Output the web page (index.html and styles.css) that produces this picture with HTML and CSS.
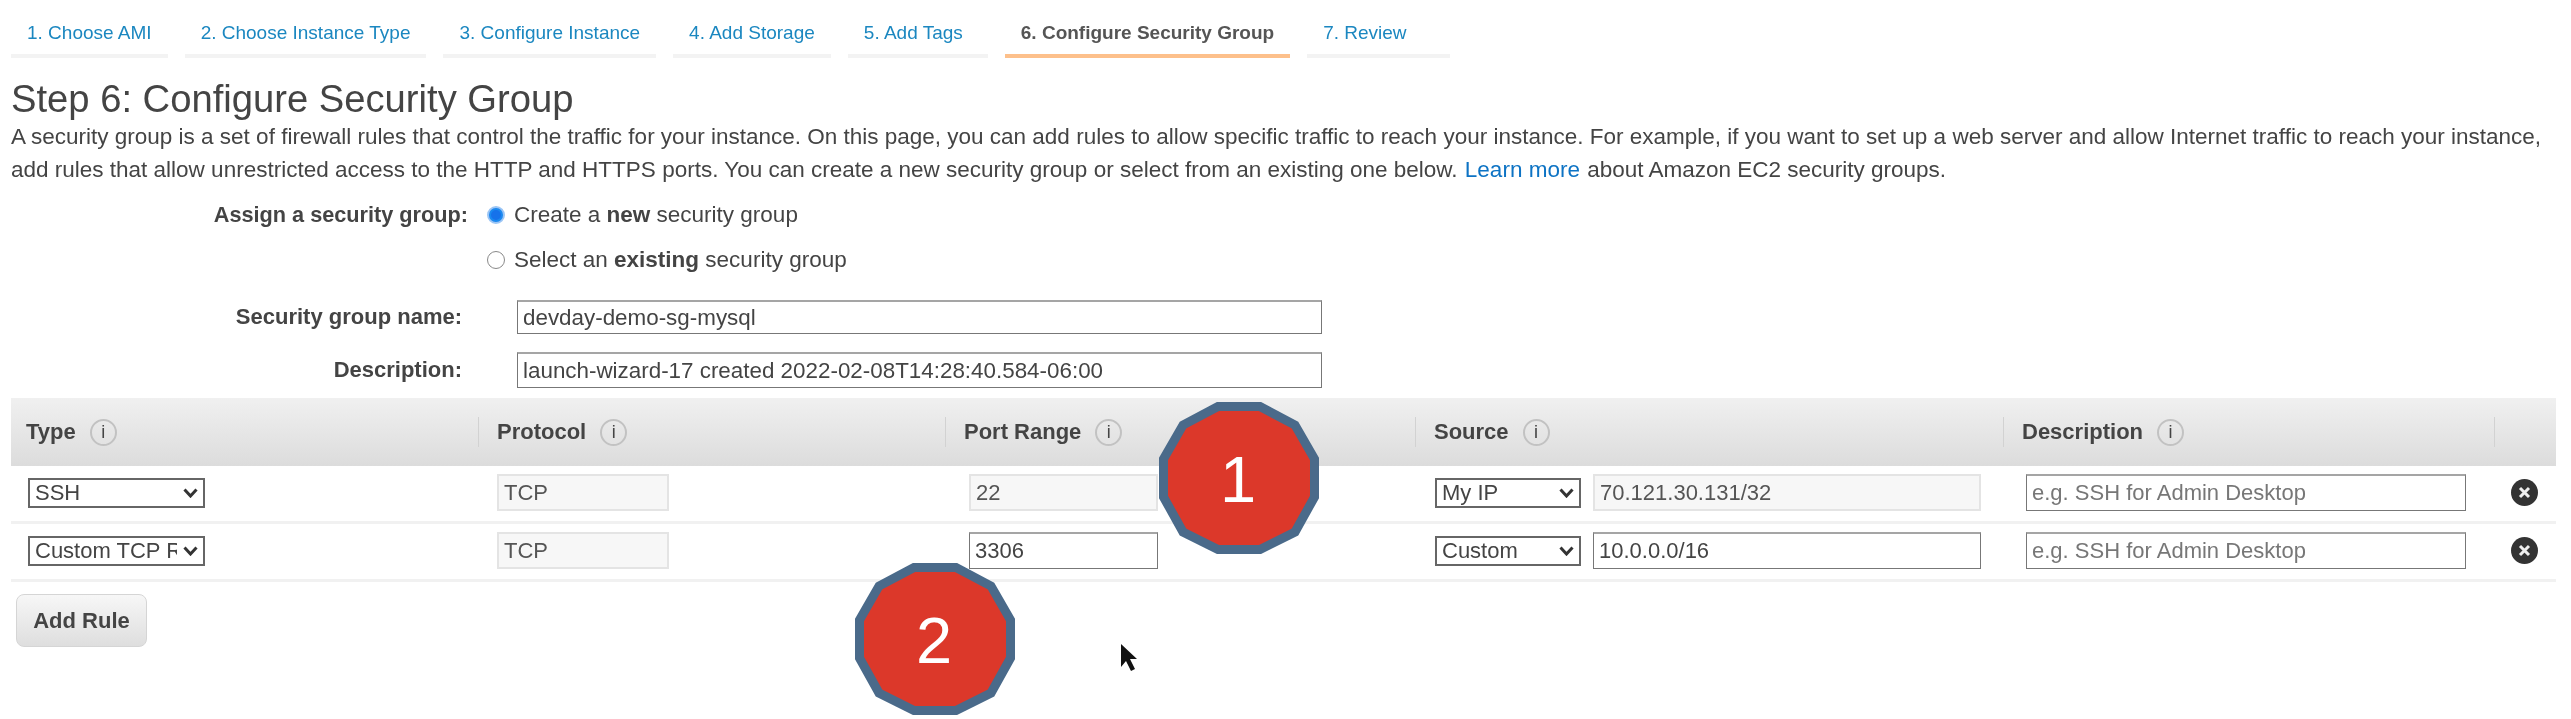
FILE: index.html
```html
<!DOCTYPE html>
<html>
	<head>
		<meta charset="UTF-8">
		<title>Step 6: Configure Security Group</title>
		<link rel="stylesheet" href="styles.css">
	</head>
	<body>
		<div id="page">
			<nav class="wizard">
				<a class="tab">1. Choose AMI</a>
				<a class="tab">2. Choose Instance Type</a>
				<a class="tab">3. Configure Instance</a>
				<a class="tab">4. Add Storage</a>
				<a class="tab tags">5. Add Tags</a>
				<a class="tab active">6. Configure Security Group</a>
				<a class="tab review">7. Review</a>
			</nav>
			<h1>Step 6: Configure Security Group</h1>
			<p class="intro">A security group is a set of firewall rules that control the traffic for your instance. On this page, you can add rules to allow specific traffic to reach your instance. For example, if you want to set up a web server and allow Internet traffic to reach your instance,<br>add rules that allow unrestricted access to the HTTP and HTTPS ports. You can create a new security group or select from an existing one below. <a class="more">Learn more</a> about Amazon EC2 security groups.</p>

			<div class="assign">
				<label class="assign-label">Assign a security group:</label>
				<input type="radio" name="sg" checked>
				<span>Create a <b>new</b> security group</span>
			</div>
			<div class="assign second">
				<input type="radio" name="sg">
				<span>Select an <b>existing</b> security group</span>
			</div>
			<div class="field">
				<label>Security group name:</label>
				<input type="text" class="wide" value="devday-demo-sg-mysql">
			</div>
			<div class="field desc">
				<label>Description:</label>
				<input type="text" class="wide tall" value="launch-wizard-17 created 2022-02-08T14:28:40.584-06:00">
			</div>

			<div class="rules">
				<div class="head">
					<div class="th">Type <i class="info">i</i></div>
					<div class="th">Protocol <i class="info">i</i></div>
					<div class="th">Port Range <i class="info">i</i></div>
					<div class="th">Source <i class="info">i</i></div>
					<div class="th">Description <i class="info">i</i></div>
					<div class="th"></div>
				</div>
				<div class="row">
					<select class="type"><option>SSH</option></select>
					<input type="text" class="proto" value="TCP" disabled>
					<input type="text" class="port" value="22" disabled>
					<div class="source">
						<select class="src"><option>My IP</option></select>
						<input type="text" class="cidr" value="70.121.30.131/32" disabled>
					</div>
					<input type="text" class="note" placeholder="e.g. SSH for Admin Desktop">
					<svg class="remove" viewBox="0 0 27 27"><circle cx="13.5" cy="13.5" r="13.5" fill="#333"/><path d="M9 9l9 9M18 9l-9 9" stroke="#eee" stroke-width="3"/></svg>
				</div>
				<div class="row">
					<select class="type"><option>Custom TCP Rule</option></select>
					<input type="text" class="proto" value="TCP" disabled>
					<input type="text" class="port" value="3306">
					<div class="source">
						<select class="src"><option>Custom</option></select>
						<input type="text" class="cidr" value="10.0.0.0/16">
					</div>
					<input type="text" class="note" placeholder="e.g. SSH for Admin Desktop">
					<svg class="remove" viewBox="0 0 27 27"><circle cx="13.5" cy="13.5" r="13.5" fill="#333"/><path d="M9 9l9 9M18 9l-9 9" stroke="#eee" stroke-width="3"/></svg>
				</div>
			</div>
			<button class="add">Add Rule</button>
		</div>

		<svg class="badge one" viewBox="0 0 160 152"><polygon points="59,4.5 101,4.5 136,23 155.5,57 155.5,95 136,130 101,147.5 59,147.5 24,130 4.5,95 4.5,57 24,23"/><text x="79" y="100">1</text></svg>
		<svg class="badge two" viewBox="0 0 160 152"><polygon points="59,4.5 101,4.5 136,23 155.5,57 155.5,95 136,130 101,147.5 59,147.5 24,130 4.5,95 4.5,57 24,23"/><text x="79" y="100">2</text></svg>
		<svg class="cursor" viewBox="0 0 20 30"><path d="M2 1v23l5-6 5 10 4-2-5-10h7z" fill="#111"/></svg>
	</body>
</html>
```

FILE: styles.css
```css
body {
	margin: 0;
	background: #fff;
	color: #444;
	font-family: "Liberation Sans", Arial, sans-serif;
	font-size: 22.5px;
}
#page {
	filter: blur(.5px);
}
.wizard {
	display: flex;
	gap: 17px;
	padding: 20px 0 0 11px;
}
.tab {
	padding: 0 16px 8px;
	line-height: 26px;
	font-size: 19px;
	color: #1b87c0;
	border-bottom: 4px solid #f3f3f3;
}
.tab.tags {
	padding-right: 25px;
}
.tab.review {
	padding-right: 43px;
}
.tab.active {
	color: #555;
	font-weight: bold;
	border-bottom-color: #fdc08b;
}
h1 {
	margin: 20px 0 0 11px;
	font-size: 38.2px;
	font-weight: normal;
	line-height: 42px;
	color: #444;
}
.intro {
	margin: 0 0 0 11px;
	line-height: 33px;
	white-space: nowrap;
}
.more {
	color: #0d73c4;
	margin: 0 1px;
}
.assign {
	display: flex;
	align-items: center;
	height: 30px;
	margin-top: 14px;
}
.assign.second {
	margin-top: 15px;
	padding-left: 487px;
}
.assign-label {
	width: 468px;
	margin-right: 19px;
	text-align: right;
	font-weight: bold;
	font-size: 21.7px;
}
.assign input {
	appearance: none;
	width: 18px;
	height: 18px;
	margin: 0 9px 0 0;
	border: 1px solid #888;
	border-radius: 50%;
	background: #fff;
}
.assign input:checked {
	border: 2px solid #9cc6f5;
	background: #1672ea;
	box-shadow: inset 0 0 0 2px #1a8af0;
}
.field {
	display: flex;
	align-items: center;
	margin-top: 25px;
}
.field.desc {
	margin-top: 18px;
}
.field label {
	width: 462px;
	margin-right: 55px;
	text-align: right;
	font-weight: bold;
	font-size: 22px;
}
input[type=text], select {
	box-sizing: border-box;
	margin: 0;
	font-family: inherit;
	font-size: 22px;
	color: #444;
	background: #fff;
	border: 1px solid #777;
	border-top: 2px solid #a5a5a5;
	padding: 0 5px;
	height: 37px;
	border-radius: 0;
}
input[type=text]:disabled {
	background: #f7f7f7;
	border: 2px solid #e4e4e4;
	color: #555;
}
input::placeholder {
	color: #777;
}
.wide {
	width: 805px;
	height: 34px !important;
	font-size: 22.4px !important;
}
.wide.tall {
	height: 36px !important;
}
select {
	appearance: none;
	height: 30px;
	border: 2px solid #666;
	padding: 0 26px 0 5px;
	background: #fff url("data:image/svg+xml,%3Csvg xmlns='http://www.w3.org/2000/svg' width='15' height='10'%3E%3Cpath d='M1.5 1.5L7.5 8l6-6.5' fill='none' stroke='%23333' stroke-width='3'/%3E%3C/svg%3E") no-repeat right 5px center;
}
.rules {
	margin: 10px 15px 0 11px;
}
.head {
	display: grid;
	grid-template-columns: 467px 467px 470px 588px 491px 1fr;
	height: 68px;
	align-items: center;
	background: linear-gradient(#f0f0f0, #dcdcdc);
}
.th {
	display: flex;
	align-items: center;
	gap: 14px;
	height: 30px;
	padding-left: 18px;
	font-weight: bold;
	font-size: 22px;
	border-left: 1px solid #d2d2d2;
}
.th:first-child {
	padding-left: 15px;
	border-left: 0;
}
.info {
	box-sizing: border-box;
	width: 27px;
	height: 27px;
	border: 2px solid #c2c2c2;
	border-radius: 50%;
	font-style: normal;
	font-weight: normal;
	font-size: 18px;
	line-height: 23px;
	text-align: center;
}
.row {
	display: grid;
	grid-template-columns: 469px 472px 466px 591px 485px 1fr;
	align-items: center;
	box-sizing: border-box;
	height: 58px;
	padding: 0 0 2px 17px;
	border-bottom: 3px solid #f1f1f1;
}
.type {
	width: 177px;
}
.proto {
	width: 172px;
}
.port {
	width: 189px;
}
.source {
	display: flex;
	align-items: center;
	gap: 12px;
}
.src {
	width: 146px;
}
.cidr {
	width: 388px;
}
.note {
	width: 440px;
}
.remove {
	width: 27px;
	height: 27px;
}
.add {
	display: block;
	width: 131px;
	height: 53px;
	margin: 12px 0 0 16px;
	font-family: inherit;
	font-size: 22px;
	font-weight: bold;
	color: #444;
	border: 1px solid #d5d5d5;
	border-radius: 8px;
	background: linear-gradient(#f7f7f7, #dedede);
}
.badge {
	position: absolute;
	width: 160px;
	height: 152px;
}
.badge.one {
	left: 1159px;
	top: 402px;
}
.badge.two {
	left: 855px;
	top: 563px;
}
.badge polygon {
	fill: #dc382a;
	stroke: #4a6a8a;
	stroke-width: 9;
}
.badge text {
	fill: #fff;
	font-size: 65px;
	text-anchor: middle;
}
.cursor {
	position: absolute;
	left: 1119px;
	top: 643px;
	width: 20px;
	height: 30px;
}
```
